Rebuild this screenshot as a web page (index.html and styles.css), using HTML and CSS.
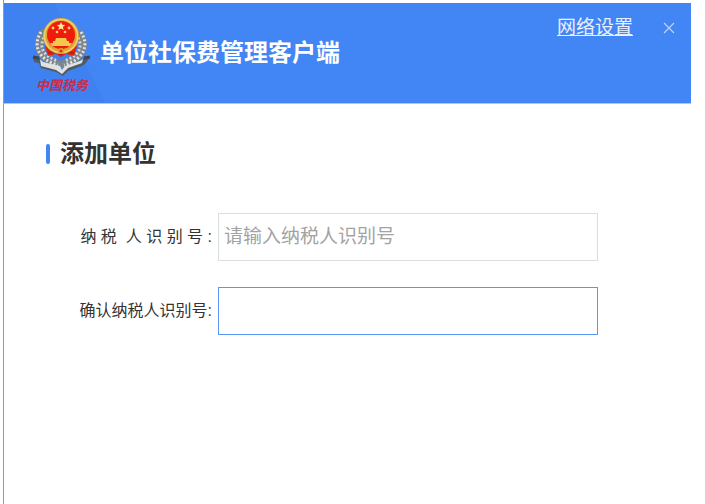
FILE: index.html
```
<!DOCTYPE html>
<html lang="zh-CN">

<head>
    <meta charset="UTF-8">
    <meta name="viewport" content="width=device-width, initial-scale=1">
    <title>单位社保费管理客户端</title>
    <link rel="stylesheet" href="styles.css">
</head>

<body>
    <div class="window">
        <header class="header">
            <div class="logo">
                <svg class="emblem" viewBox="0 0 60 60" aria-hidden="true">
                    <!-- 麦穗 -->
                    <g fill="none">
                        <path d="M11 17C2 30 9 43 26 48M47 17C56 30 49 43 32 48" stroke="#7c848c" stroke-width="8" stroke-linecap="round"/>
                        <path d="M9 16C0 30 7 44 26 49M49 16C58 30 51 44 32 49" stroke="#e2e5e6" stroke-width="3" stroke-dasharray="2 2"/>
                        <path d="M13 20C6 31 11 40 26 45M45 20C52 31 47 40 32 45" stroke="#d4d8da" stroke-width="3" stroke-dasharray="2 2" stroke-dashoffset="2"/>
                    </g>
                    <!-- 底部缎带 -->
                    <path d="M1 41L8 42L11 47L27 51L30 55L34 50L48 46L51 42L58 41L54 47L50 50L36 55L31 60L24 56L9 52L7 47L2 46Z" fill="#555b63"/>
                    <path d="M1 41L7 42M58 41L52 42" stroke="#3f464e" stroke-width="3"/>
                    <path d="M8 43L11 46L28 50L30 54L33 50L48 45L51 43L50 47L36 52L30 58L24 54L9 50Z" fill="#e1e3e3"/>
                    <!-- 国徽 -->
                    <path d="M13 30L16 40L24 38L29 41L34 38L42 40L45 30Z" fill="#e8200e"/>
                    <path d="M16 37L24 36L29 39L34 36L42 37" fill="none" stroke="#a91d12" stroke-width="1"/>
                    <circle cx="29" cy="20" r="18" fill="#dca633"/>
                    <circle cx="29" cy="20" r="16.5" fill="none" stroke="#f1d076" stroke-width="1.5"/>
                    <circle cx="29" cy="19" r="14" fill="#f01c0b"/>
                    <path d="M29 6l1.2 2.7 3 .3-2.3 2 .7 2.9-2.6-1.5-2.6 1.5.7-2.9-2.3-2 3-.3z" fill="#ffe9a0"/>
                    <g fill="#ffd27a">
                        <circle cx="21" cy="12" r="1.4"/>
                        <circle cx="25" cy="16" r="1.3"/>
                        <circle cx="33" cy="16" r="1.3"/>
                        <circle cx="37" cy="12" r="1.4"/>
                    </g>
                    <path d="M24 22h10l1 3h2v2h3l-2 3H20l-2-3h3v-2h2z" fill="#f4c64c"/>
                    <circle cx="29" cy="35" r="3" fill="#d8a12d"/>
                    <circle cx="29" cy="35" r="1.3" fill="#e8200e"/>
                </svg>
                <span class="logo-text">中国税务</span>
            </div>
            <h1 class="title">单位社保费管理客户端</h1>
            <nav class="actions">
                <a href="#" class="network-link">网络设置</a>
                <button type="button" class="close" aria-label="关闭">
                    <svg viewBox="0 0 12 12" width="12" height="12" aria-hidden="true">
                        <path d="M1 1L11 11M11 1L1 11" stroke="#c4d4ee" stroke-width="1.1"/>
                    </svg>
                </button>
            </nav>
        </header>

        <main class="content">
            <h2 class="heading">添加单位</h2>
            <form class="form">
                <div class="form-row">
                    <label for="taxNo">纳 税  人 识 别 号 :</label>
                    <input type="text" id="taxNo" placeholder="请输入纳税人识别号">
                </div>
                <div class="form-row">
                    <label for="taxNoConfirm">确认纳税人识别号:</label>
                    <input type="text" id="taxNoConfirm" class="active">
                </div>
            </form>
        </main>
    </div>
</body>

</html>
```

FILE: styles.css
```
* {
    margin: 0;
    padding: 0;
    box-sizing: border-box;
}

body {
    font-family: "Liberation Sans", "Noto Sans CJK SC", sans-serif;
    background-color: #fff;
    color: #333;
}

.window {
    min-height: 100vh;
    padding: 3px 14px 0 0;
    margin-left: 3px;
    border-left: 1px solid #999;
}

/* Header */
.header {
    display: flex;
    align-items: flex-start;
    min-height: 101px;
    padding: 13px 14px 6px 28px;
    /* 左下角的浅色斜纹 */
    background: linear-gradient(63deg, #3f81f0 90px, #4285f5 91px);
    border-bottom: 1px solid #a9c8fb;
    color: #fff;
}

.logo {
    display: flex;
    flex-direction: column;
    align-items: center;
    width: 60px;
}

.emblem {
    width: 60px;
    height: 60px;
}

.logo-text {
    font-size: 13px;
    line-height: 20px;
    font-weight: 700;
    font-style: italic;
    white-space: nowrap;
    color: #c92c47;
}

.title {
    margin: 19px 0 0 8px;
    font-size: 24px;
    line-height: 36px;
    font-weight: 700;
    white-space: nowrap;
}

.actions {
    display: flex;
    align-items: center;
    gap: 28px;
    margin-left: auto;
}

.network-link {
    font-size: 19px;
    line-height: 24px;
    color: #e8f0fe;
    white-space: nowrap;
}

.close {
    display: flex;
    padding: 2px;
    border: none;
    background: none;
    cursor: pointer;
}

/* Content */
.content {
    padding: 32px 93px 32px 42px;
}

.heading {
    display: flex;
    align-items: center;
    gap: 10px;
    font-size: 24px;
    line-height: 36px;
    font-weight: 700;
}

.heading::before {
    content: "";
    width: 4px;
    height: 20px;
    border-radius: 2px;
    background-color: #4285f5;
}

.form {
    display: flex;
    flex-direction: column;
    gap: 26px;
    margin-top: 41px;
}

.form-row {
    display: flex;
    align-items: center;
    gap: 6px;
}

.form-row label {
    width: 166px;
    font-size: 16px;
    line-height: 24px;
    text-align: right;
    white-space: pre;
}

.form-row input {
    flex: 1;
    min-width: 0;
    height: 48px;
    padding: 0 5px;
    border: 1px solid #d9dfe1;
    background-color: #fff;
    font-family: inherit;
    font-size: 19px;
    color: #333;
    outline: none;
}

.form-row input::placeholder {
    color: #a3a3a3;
    opacity: 1;
}

.form-row input.active,
.form-row input:focus {
    border-color: #5a96f5;
}
```
